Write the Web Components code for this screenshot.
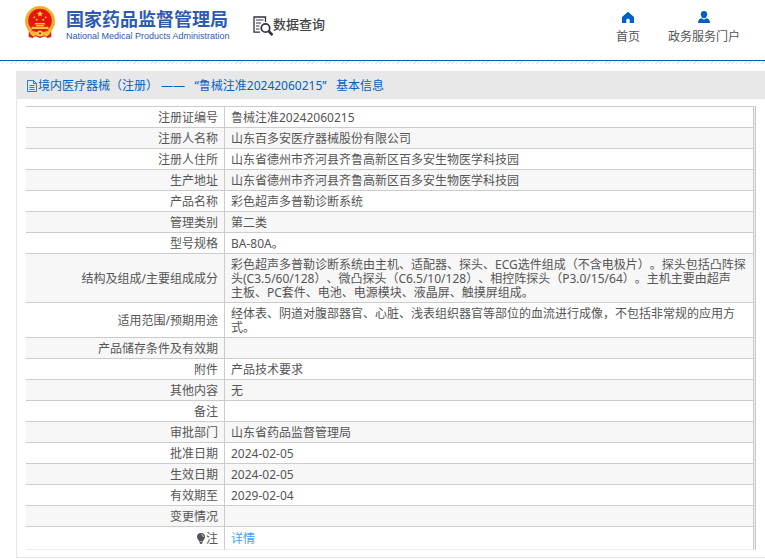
<!DOCTYPE html>
<html lang="zh-CN">
<head>
<meta charset="utf-8">
<title>国家药品监督管理局 数据查询</title>
<style>
body{margin:0;background:#fff;color:#555;font:12px/14px "Noto Sans","Noto Sans CJK SC",sans-serif}
</style>
</head>
<body>
<nmpa-page></nmpa-page>
<script>
const define = (name, html, setup) => customElements.define(name, class extends HTMLElement {
  constructor() {
    super();
    const t = document.createElement('template');
    t.innerHTML = html;
    this.attachShadow({mode: 'open'}).append(t.content.cloneNode(true));
  }
  connectedCallback() { if (setup) setup(this, this.shadowRoot); }
});

define('nmpa-emblem', `
<style>:host{display:block;flex:none}svg{display:block}</style>
<svg width="32" height="34" viewBox="0 0 34 36" aria-hidden="true">
  <path d="M5 25 5 33 9 34 12 32 17 34 22 32 25 34 29 33 29 25Z" fill="#d9201a"/>
  <circle cx="17" cy="16" r="16" fill="#f2b632"/>
  <circle cx="17" cy="16" r="14.4" fill="none" stroke="#dc8f1e" stroke-width="1" stroke-dasharray="1.5 2"/>
  <circle cx="17" cy="15.500" r="12.600" fill="#e3170d"/>
  <path d="M17 5l.9 2.200 2.400.1-1.900 1.500.7 2.300-2.100-1.300-2.100 1.300.7-2.300-1.900-1.500 2.400-.1Z" fill="#ffd94a"/>
  <g fill="#f6c53c"><circle cx="11" cy="12" r="1"/><circle cx="23" cy="12" r="1"/><circle cx="13.500" cy="14.500" r="1"/><circle cx="20.500" cy="14.500" r="1"/>
  <path d="M12 18h10l1 1.500H11ZM13 20h8v1.500h-8ZM8 22h18v2.500H8Z"/></g>
  <path d="M5 25q5 5 9 2.500h6q4 2.500 9-2.500l-1 4-6 2-2-2h-6l-2 2-6-2Z" fill="#f5bd36"/>
  <path d="M8 25.500q3 2 6 .5h6q3 1.500 6-.5" fill="none" stroke="#d9201a"/>
  <circle cx="17" cy="29" r="3" fill="#ffd34d"/><circle cx="17" cy="29" r="1.300" fill="#d9201a"/>
  <path d="M7 29l4 3M27 29l-4 3" stroke="#ffc933" stroke-width="1.500"/>
</svg>`);

define('nmpa-brand', `
<style>
:host{display:flex;align-items:flex-start;gap:10px;color:#2d5bb0}
.text{width:162px;padding-top:2px}
.cn{font-size:18px;line-height:22px;font-weight:700;white-space:nowrap}
.en{font:9px/12px "Liberation Sans",sans-serif;white-space:nowrap}
</style>
<nmpa-emblem></nmpa-emblem>
<div class="text"><div class="cn"><slot></slot></div><div class="en"><slot name="en"></slot></div></div>`);

define('nmpa-query', `
<style>:host{display:flex;align-items:flex-start;color:#444;font-size:13px;line-height:16px;font-weight:500;white-space:nowrap}svg{display:block}</style>
<svg width="20" height="20" viewBox="0 0 20 20" fill="none" stroke="#303040" aria-hidden="true">
<path d="M7 16.200H1V1h11.500v5" stroke-width="1.300"/><path d="M3 4h7.500M3 7h5M3 10h3.500M3 13h3.500" stroke-width="1"/>
<circle cx="12.500" cy="12" r="4.200" stroke-width="1.700"/><path d="M15.500 15l4 4" stroke-width="2.500"/></svg><slot></slot>`);

define('nmpa-nav-link', `
<style>
:host{display:block}
a{display:flex;flex-direction:column;align-items:center;gap:6px;color:#555;text-decoration:none;white-space:nowrap}
svg{display:block;fill:#0061c4}
</style>
<a href="#"><svg width="14" height="13" viewBox="0 0 14 13" aria-hidden="true"><path></path></svg><slot></slot></a>`,
(el, root) => root.querySelector('path').setAttribute('d', el.getAttribute('icon') === 'home'
  ? 'M7 .8 13 6V12H8.700V9Q8.700 7.800 7 7.800T5.300 9V12H1V6Z'
  : 'M7 0a3.200 3.400 0 0 1 3.200 3.400C10.200 5.800 8.500 7.300 7 7.300S3.800 5.800 3.800 3.400A3.200 3.400 0 0 1 7 0ZM4.500 7.300 7 8.800 9.500 7.300Q13 8 13 12H1Q1 8 4.500 7.300Z'));

define('nmpa-header', `
<style>
:host{display:block}
header{display:flex;align-items:flex-start;box-sizing:border-box;height:61px;padding:0 25px 0 24px;border-bottom:1px solid #0061c1}
nmpa-brand{padding-top:6px}nmpa-query{padding:16px 0 0 25px}
nav{display:flex;gap:28px;margin-left:auto;padding-top:11px}
.hatch{height:3px;background:repeating-linear-gradient(135deg,#e3e3e8 0 1px,#fff 1px 3px)}
</style>
<header>
<nmpa-brand>国家药品监督管理局<span slot="en">National Medical Products Administration</span></nmpa-brand>
<nmpa-query>数据查询</nmpa-query>
<nav><nmpa-nav-link icon="home">首页</nmpa-nav-link><nmpa-nav-link icon="user">政务服务门户</nmpa-nav-link></nav>
</header><div class="hatch"></div>`);

define('nmpa-panel', `
<style>
:host{display:block;margin:7px 0 0 16px;border-left:1px solid #e6e6ea;border-bottom:1px solid #e6e6ea}
h1{display:flex;align-items:center;gap:1px;margin:0 0 0 -1px;padding:8px 11px 5px;background:#e8e8e8;border-bottom:1px solid #e6e6ee;color:#0061c4;font-size:12px;line-height:14px;font-weight:400;white-space:pre}
svg{display:block}
.body{padding:7px 9px 7px}
</style>
<h1><svg width="10" height="12" viewBox="0 0 10 12" fill="none" stroke="#0061c4" stroke-width=".8" aria-hidden="true"><path d="M.5.500h6l3 3v8h-9ZM6.500.500v3h3M2.500 5.500h5M2.500 7.500h5M2.500 9.500h5"/></svg><slot name="title"></slot></h1>
<div class="body"><slot></slot></div>`);

const rows = [
['注册证编号','鲁械注准20242060215'],['注册人名称','山东百多安医疗器械股份有限公司'],
['注册人住所','山东省德州市齐河县齐鲁高新区百多安生物医学科技园'],['生产地址','山东省德州市齐河县齐鲁高新区百多安生物医学科技园'],
['产品名称','彩色超声多普勒诊断系统'],['管理类别','第二类'],['型号规格','BA-80A。'],
['结构及组成/主要组成成分','彩色超声多普勒诊断系统由主机、适配器、探头、ECG选件组成（不含电极片）。探头包括凸阵探头(C3.5/60/128）、微凸探头（C6.5/10/128）、相控阵探头（P3.0/15/64）。主机主要由超声\n主板、PC套件、电池、电源模块、液晶屏、触摸屏组成。'],
['适用范围/预期用途','经体表、阴道对腹部器官、心脏、浅表组织器官等部位的血流进行成像，不包括非常规的应用方式。'],
['产品储存条件及有效期',''],['附件','产品技术要求'],['其他内容','无'],['备注',''],['审批部门','山东省药品监督管理局'],
['批准日期','2024-02-05'],['生效日期','2024-02-05'],['有效期至','2029-02-04'],['变更情况','']];

define('nmpa-record', `
<style>
:host{display:block;background:#ececf2;border-right:1px solid #c9c9ce;padding-right:1px}
table{width:100%;border-collapse:separate;border-spacing:0;background:#fff;border-top:1px solid #ccc;text-spacing-trim:space-all}
th,td{height:14px;padding:4px 6px 2px;border-right:1px solid #ccc;border-bottom:1px solid #ccc;font-weight:400;vertical-align:middle}
th{width:186px;text-align:right}
td{text-align:left;white-space:pre-line}
tr:nth-child(even){background:#f7f7f7}
tr:last-child>*{padding:5px 6px 3px;border-bottom-color:#eee}
a{color:#409eff;text-decoration:none}
svg{vertical-align:-1px;fill:#555}
</style>
<table><tbody></tbody></table>`, (el, root) => {
  const body = root.querySelector('tbody');
  for (const [label, value] of rows) {
    const tr = body.insertRow(), th = document.createElement('th');
    th.scope = 'row'; th.textContent = label; tr.append(th);
    tr.insertCell().textContent = value;
  }
  body.insertAdjacentHTML('beforeend', `<tr><th scope="row"><svg width="10" height="11" viewBox="0 0 10 11" aria-hidden="true"><path d="M5 0a4 4 0 0 1 4 4C9 6 7 7 7 8.500H3C3 7 1 6 1 4A4 4 0 0 1 5 0ZM3.500 9h3v1l-1 1h-1l-1-1Z"/><path d="M5.500 1.500Q7.500 2 7.500 4" fill="none" stroke="#fff" stroke-width=".7"/></svg>注</th><td><a href="#">详情</a></td></tr>`);
});

define('nmpa-page', `
<style>:host{display:block}span{text-spacing-trim:space-all}</style>
<nmpa-header></nmpa-header>
<main><nmpa-panel><span slot="title">境内医疗器械（注册） ——   “鲁械注准20242060215”   基本信息</span><nmpa-record></nmpa-record></nmpa-panel></main>`);
</script>
</body>
</html>
